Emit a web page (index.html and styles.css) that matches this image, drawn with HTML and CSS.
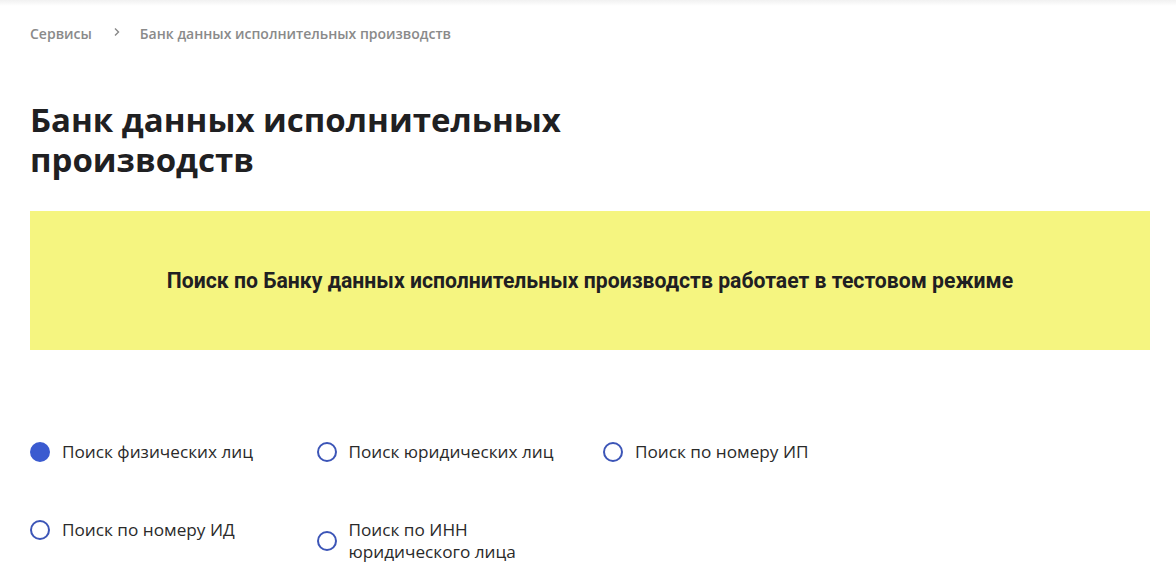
FILE: index.html
```html
<!DOCTYPE html>
<html lang="ru">
<head>
<meta charset="utf-8">
<title>Банк данных исполнительных производств</title>
<link rel="stylesheet" href="styles.css">
</head>
<body>
<div class="topshade"></div>
<main class="page">
  <nav class="crumbs">
    <a class="crumb" href="#">Сервисы</a>
    <span class="sep">
      <svg width="8" height="10" viewBox="0 0 8 10"><path d="M2 1.5 L5.5 5 L2 8.5" fill="none" stroke="#888" stroke-width="1.4"/></svg>
    </span>
    <span class="crumb">Банк данных исполнительных производств</span>
  </nav>
  <h1 class="title">Банк данных исполнительных<br>производств</h1>
  <div class="notice">Поиск по Банку данных исполнительных производств работает в тестовом режиме</div>
  <div class="options">
    <label class="opt"><span class="radio checked"></span><span class="lbl">Поиск физических лиц</span></label>
    <label class="opt"><span class="radio"></span><span class="lbl">Поиск юридических лиц</span></label>
    <label class="opt"><span class="radio"></span><span class="lbl">Поиск по номеру ИП</span></label>
    <label class="opt top"><span class="radio"></span><span class="lbl">Поиск по номеру ИД</span></label>
    <label class="opt"><span class="radio"></span><span class="lbl">Поиск по ИНН<br>юридического лица</span></label>
  </div>
</main>
</body>
</html>
```
FILE: styles.css
```css
html, body { margin: 0; padding: 0; background: #fff; }
body { font-family: "Open Sans", "Liberation Sans", sans-serif; color: #1f2022; }
.topshade { height: 6px; background: linear-gradient(#f1f1f1, #fff); }
.page { padding: 0 26px 0 30px; }
.crumbs { display: flex; align-items: center; height: 54px; font-size: 14px; font-weight: 600; color: #8a8a8a; }
.crumb { color: #8a8a8a; text-decoration: none; }
.sep { display: inline-flex; margin: 0 19px 0 21px; padding-bottom: 3px; }
.title { margin: 40px 0 0; font-size: 33px; line-height: 40px; font-weight: 700; color: #1f2022; }
.notice { margin-top: 31px; height: 139px; background: #f5f580; display: flex; align-items: center; justify-content: center; font-family: Roboto, "Liberation Sans", sans-serif; font-weight: 700; font-size: 21.2px; color: #1f2022; }
.options { margin-top: 91px; display: grid; grid-template-columns: repeat(3, 286.5px); row-gap: 56px; }
.opt { display: flex; align-items: center; gap: 12px; font-size: 17.2px; line-height: 22px; color: #2a2a2a; font-weight: 400; cursor: pointer; }
.opt.top { align-self: start; }
.radio { width: 16px; height: 16px; border: 2px solid #3c55b7; border-radius: 50%; flex: none; }
.radio.checked { background: #3b5bd0; border-color: #3b5bd0; }
```
